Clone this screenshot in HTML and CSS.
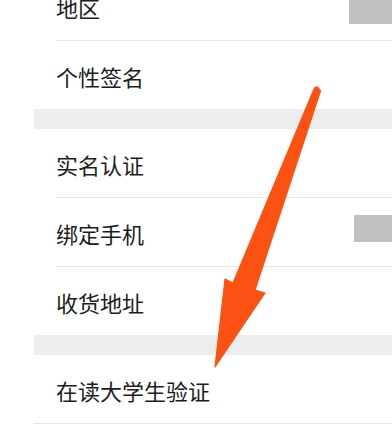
FILE: index.html
```html
<!DOCTYPE html>
<html lang="zh-CN">
<head>
<meta charset="utf-8">
<link rel="stylesheet" href="styles.css">
</head>
<body>
<div class="page">
  <div class="list">
    <div class="group">
      <div class="row"><span class="label">地区</span><span class="mask mask-a"></span></div>
      <div class="row"><span class="label">个性签名</span></div>
    </div>
    <div class="gap"></div>
    <div class="group">
      <div class="row"><span class="label">实名认证</span></div>
      <div class="row"><span class="label">绑定手机</span><span class="mask mask-b"></span></div>
      <div class="row"><span class="label">收货地址</span></div>
    </div>
    <div class="gap"></div>
    <div class="group group-bordered">
      <div class="row"><span class="label">在读大学生验证</span></div>
    </div>
  </div>
  <svg class="arrow" width="392" height="426" viewBox="0 0 392 426" xmlns="http://www.w3.org/2000/svg">
    <path d="M314 89 Q317 84 320.5 91 L255 290 L265 293 L215 367 L225 279 L233 283 Z" fill="#fb5214" stroke="#fb5214" stroke-width="1.2" stroke-linejoin="round"/>
  </svg>
</div>
</body>
</html>
```
FILE: styles.css
```css
html, body {
  margin: 0;
  padding: 0;
  background: #ffffff;
}
body {
  width: 392px;
  height: 426px;
  overflow: hidden;
  font-family: "Noto Sans CJK SC", "Noto Sans", sans-serif;
}
.page {
  position: relative;
  width: 392px;
  height: 426px;
  overflow: hidden;
}
.list {
  margin-top: -28px;
  padding-left: 34px;
}
.group {
  background: #ffffff;
}
.group-bordered {
  border-bottom: 1px solid #e6e6e8;
}
.row {
  margin-left: 22px;
  height: 68px;
  display: flex;
  align-items: center;
  justify-content: space-between;
}
.group .row:not(:last-child) {
  border-bottom: 1px solid #e8e8ea;
}
.label {
  font-size: 22px;
  color: #1c1c1c;
  line-height: 1;
  padding-top: 2px;
}
.gap {
  height: 20px;
  background: #ededf0;
}
.mask {
  display: block;
  background: #c0c0c0;
}
.mask-a {
  width: 43px;
  height: 36px;
}
.mask-b {
  width: 38px;
  height: 27px;
  margin-bottom: 7px;
}
.arrow {
  position: absolute;
  left: 0;
  top: 0;
  pointer-events: none;
}
```
